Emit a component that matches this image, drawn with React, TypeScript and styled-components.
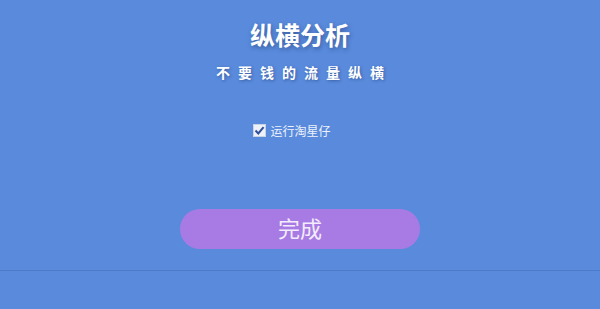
import React from "react";
import styled, { createGlobalStyle } from "styled-components";

const Global = createGlobalStyle`
  html, body { margin: 0; padding: 0; }
  body {
    background: #598adc;
    font-family: "Noto Sans CJK SC", "Noto Sans", sans-serif;
  }
`;

const Page = styled.div`
  height: 309px;
  display: flex;
  flex-direction: column;
  align-items: center;
  background: #598adc;
  overflow: hidden;
`;

const Title = styled.h1`
  margin: 19px 0 0;
  font-size: 25px;
  line-height: 30px;
  font-weight: 700;
  color: #ffffff;
  text-shadow: 1px 2px 4px rgba(20, 40, 90, 0.45);
`;

const Subtitle = styled.h2`
  margin: 13px 0 0;
  padding-left: 8px;
  font-size: 14px;
  line-height: 20px;
  font-weight: 700;
  letter-spacing: 8px;
  color: #ffffff;
  text-shadow: 1px 1px 3px rgba(20, 40, 90, 0.45);
`;

const CheckRow = styled.label`
  margin-top: 40px;
  height: 16px;
  display: flex;
  align-items: center;
  gap: 4px;
  font-size: 12px;
  color: #eef2fb;
  padding-right: 16px;
`;

const Box = styled.span`
  width: 13px;
  height: 13px;
  box-sizing: border-box;
  background: #eef1f8;
  border: 1px solid #c9d3e6;
  display: flex;
  align-items: center;
  justify-content: center;
`;

const Button = styled.button`
  margin-top: 71px;
  width: 240px;
  height: 40px;
  border: none;
  border-radius: 20px;
  background: #a87be4;
  color: #f3ecfb;
  font-family: inherit;
  font-size: 22px;
  line-height: 36px;
  padding: 0 0 4px;
  cursor: pointer;
`;

const Divider = styled.div`
  margin-top: 21px;
  width: 100%;
  height: 1px;
  background: rgba(40, 70, 140, 0.25);
`;

export default function App() {
  return (
    <>
      <Global />
      <Page>
        <Title>纵横分析</Title>
        <Subtitle>不要钱的流量纵横</Subtitle>
        <CheckRow>
          <Box>
            <svg width="11" height="11" viewBox="0 0 11 11">
              <path d="M1.5 5.5 L4.3 8.4 L9.6 2.2" fill="none" stroke="#2f4f9c" strokeWidth="2" />
            </svg>
          </Box>
          运行淘星仔
        </CheckRow>
        <Button>完成</Button>
        <Divider />
      </Page>
    </>
  );
}
